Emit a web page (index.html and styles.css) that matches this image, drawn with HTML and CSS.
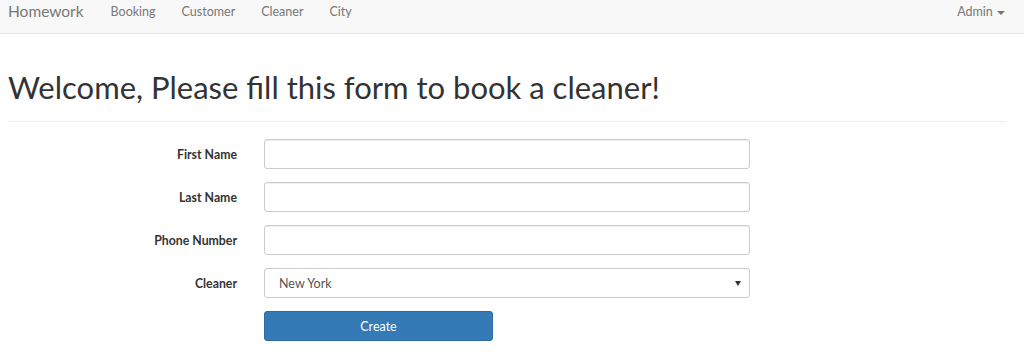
FILE: index.html
```html
<!DOCTYPE html>
<html>
<head>
<meta charset="utf-8">
<link rel="stylesheet" href="styles.css">
</head>
<body>
<nav class="navbar">
  <a class="brand" href="#">Homework</a>
  <ul class="nav">
    <li><a href="#">Booking</a></li>
    <li><a href="#">Customer</a></li>
    <li><a href="#">Cleaner</a></li>
    <li><a href="#">City</a></li>
  </ul>
  <div class="nav-right"><a href="#">Admin <span class="caret"></span></a></div>
</nav>
<main class="content">
  <h1 class="title">Welcome, Please fill this form to book a cleaner!</h1>
  <hr class="rule">
  <form class="form">
    <div class="row"><label class="label">First Name</label><input class="control" type="text"></div>
    <div class="row"><label class="label">Last Name</label><input class="control" type="text"></div>
    <div class="row"><label class="label">Phone Number</label><input class="control" type="text"></div>
    <div class="row"><label class="label">Cleaner</label>
      <div class="select"><span>New York</span><span class="arrow"></span></div>
    </div>
    <div class="row"><span class="label"></span><button class="btn" type="button">Create</button></div>
  </form>
</main>
</body>
</html>
```
FILE: styles.css
```css
* { box-sizing: border-box; }
html, body { margin: 0; padding: 0; background: #fff; }
body { font-family: Lato, "Helvetica Neue", Arial, sans-serif; font-size: 12.5px; color: #333; }
.navbar {
  height: 34px;
  background: #f8f8f8;
  border-bottom: 1px solid #e7e7e7;
  display: flex;
  align-items: flex-start;
  padding: 3px 8px 0;
  line-height: 17px;
}
.brand { color: #777; font-size: 15.5px; text-decoration: none; margin-right: 14px; line-height: 17px; }
.nav { list-style: none; margin: 0; padding: 0; display: flex; }
.nav a { display: block; color: #777; text-decoration: none; padding: 0 13px; }
.nav-right { margin-left: auto; padding-right: 11px; }
.nav-right a { color: #777; text-decoration: none; }
.caret {
  display: inline-block; width: 0; height: 0; vertical-align: middle; margin-left: 1px;
  border-top: 4px solid #777; border-left: 4px solid transparent; border-right: 4px solid transparent;
}
.content { padding: 0 8px; }
.title { font-size: 31px; font-weight: 400; margin: 36px 0 0; line-height: 1.1; color: #333; }
.rule { border: 0; border-top: 1px solid #eee; margin: 17px 10px 17px 0; }
.form { display: flex; flex-direction: column; gap: 13px; }
.row { display: flex; align-items: center; }
.label { width: 229px; text-align: right; font-weight: 700; font-size: 12.3px; margin-right: 27px; }
.control {
  width: 486px; height: 30px; border: 1px solid #ccc; border-radius: 3px;
  box-shadow: inset 0 1px 1px rgba(0,0,0,.075); font: inherit; padding: 5px 10px;
}
.select {
  width: 486px; height: 30px; border: 1px solid #ccc; border-radius: 3px;
  display: flex; align-items: center; justify-content: space-between; padding: 0 8px 0 14px;
  font-size: 12.5px; color: #555;
}
.arrow { width: 0; height: 0; border-top: 5px solid #333; border-left: 3px solid transparent; border-right: 3px solid transparent; }
.btn {
  width: 229px; height: 30px; background: #337ab7; border: 1px solid #2e6da4; border-radius: 3px;
  color: #fff; font: inherit; font-size: 12.5px; padding: 0;
}
```
